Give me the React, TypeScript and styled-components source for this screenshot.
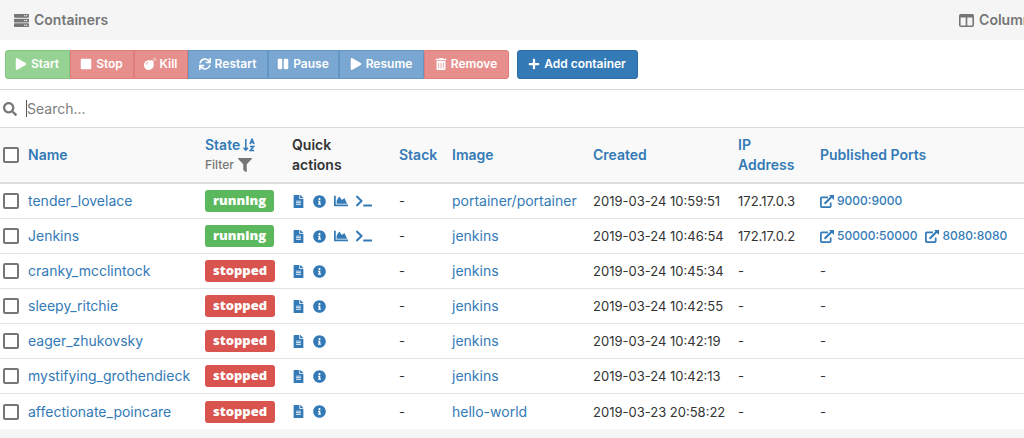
import React from 'react';
import styled, { createGlobalStyle } from 'styled-components';
import {
  FaServer, FaPlay, FaStop, FaBomb, FaSync, FaPause, FaTrashAlt, FaPlus, FaSearch,
  FaFileAlt, FaInfoCircle, FaChartArea, FaTerminal, FaFilter,
} from 'react-icons/fa';

const GlobalStyle = createGlobalStyle`
  * { box-sizing: border-box; }
  body {
    margin: 0;
    background: #f5f5f5;
    color: #333;
    font-family: Inter, "Open Sans", sans-serif;
    font-size: 13px;
    line-height: 20px;
  }
  svg { display: block; flex: none; }
`;

const Page = styled.main`
  overflow: hidden;
`;

const Widget = styled.section`
  min-width: 1053px;
  background: #fff;
`;

const TitleBar = styled.header`
  display: flex;
  align-items: center;
  justify-content: space-between;
  height: 40px;
  padding: 0 14px;
  background: #f5f5f5;
  color: #767676;
`;

const Title = styled.h1`
  display: flex;
  align-items: center;
  gap: 5px;
  margin: 0;
  font-size: 14px;
  font-weight: 600;
`;

const ColumnsButton = styled.button`
  display: flex;
  align-items: center;
  gap: 5px;
  padding: 0;
  border: 0;
  background: none;
  color: inherit;
  font: 600 14px/20px Inter, sans-serif;
  cursor: pointer;
`;

const ActionBar = styled.div`
  display: flex;
  gap: 8px;
  padding: 10px 5px;
`;

const ButtonGroup = styled.div`
  display: flex;
  & > button { border-radius: 0; }
  & > button:first-child { border-radius: 3px 0 0 3px; }
  & > button:last-child { border-radius: 0 3px 3px 0; }
`;

const tones = {
  success: ['#96d294', '#82c57f'],
  danger: ['#e78f8d', '#e07c79'],
  primary: ['#7aa7d1', '#6496c5'],
  solid: ['#337ab7', '#2e6da4'],
};

const ActionButton = styled.button<{ $tone: keyof typeof tones; $width: number }>`
  display: flex;
  align-items: center;
  justify-content: center;
  gap: 4px;
  width: ${(p) => p.$width}px;
  height: 29px;
  padding: 0 1px 1px 0;
  border: 1px solid ${(p) => tones[p.$tone][1]};
  border-radius: 3px;
  background: ${(p) => tones[p.$tone][0]};
  color: #fff;
  font: 600 12px/18px Inter, sans-serif;
  white-space: nowrap;
`;

const SearchBar = styled.label`
  display: flex;
  align-items: center;
  gap: 9px;
  height: 38px;
  padding: 0 3px;
  border-top: 1px solid #d9d9d9;
  color: #767676;
`;

const SearchInput = styled.input`
  flex: 1;
  height: 17px;
  padding: 0;
  border: 0;
  border-left: 1px solid #555;
  outline: 0;
  background: none;
  font: 14px/17px Inter, sans-serif;
  &::placeholder { color: #7d7d7d; opacity: 1; }
`;

const Table = styled.table`
  width: 100%;
  table-layout: fixed;
  border-collapse: separate;
  border-spacing: 0;
`;

const HeadCell = styled.th`
  height: 57px;
  padding: 0;
  border-top: 1px solid #d9d9d9;
  border-bottom: 2px solid #ddd;
  background: #f9f9f9;
  font-size: 14px;
  font-weight: 600;
  text-align: left;
`;

const Cell = styled.td`
  height: 35px;
  padding: 0;
  border-bottom: 1px solid #e2e2e2;
  white-space: nowrap;
  tr:last-child > & { border-bottom: 0; }
`;

const Link = styled.a`
  color: #337ab7;
  text-decoration: none;
`;

const CellLink = styled(Link)`
  font-size: 14px;
`;

const Inline = styled.span<{ $gap: number }>`
  display: flex;
  align-items: center;
  gap: ${(p) => p.$gap}px;
`;

const IconLink = styled(Link)`
  display: inline-flex;
  align-items: center;
  gap: 3px;
`;

const PortLink = styled(IconLink)`
  font-size: 12px;
  font-weight: 500;
`;

const FilterButton = styled.button`
  display: flex;
  align-items: center;
  gap: 4px;
  padding: 0;
  border: 0;
  background: none;
  color: #767676;
  font: 500 12px/20px Inter, sans-serif;
`;

const Check = styled.input`
  display: block;
  appearance: none;
  width: 16px;
  height: 16px;
  margin: 0 0 0 3px;
  border: 2px solid #767676;
  border-radius: 2px;
  background: #fff;
`;

const Badge = styled.span<{ $running: boolean }>`
  display: inline-block;
  height: 22px;
  padding: 0 8px;
  border-radius: 3px;
  background: ${(p) => (p.$running ? '#5cb85c' : '#d9534f')};
  color: #fff;
  font: 800 13px/20px "Open Sans", sans-serif;
  vertical-align: middle;
`;

const ColumnsIcon = () => (
  <svg width="15" height="13" viewBox="0 0 15 13" fill="none" stroke="currentColor" aria-hidden="true">
    <rect x=".8" y=".8" width="13.4" height="11.4" rx="1" strokeWidth="1.6" />
    <path d="M1 2h13" strokeWidth="3" />
    <path d="M7.5 3v9" strokeWidth="1.6" />
  </svg>
);

const SortAlphaIcon = () => (
  <svg width="12" height="14" viewBox="0 0 12 14" fill="none" stroke="currentColor" strokeWidth="1.5" aria-hidden="true">
    <path d="M2.8 1v11M.6 9.8 2.8 12.2 5 9.8" />
    <path d="M6.9 6 9 1.2 11.1 6M7.8 4.6h2.4M7 8.6h3.5L7.3 12.5h3.9" strokeWidth="1.5" />
  </svg>
);

const ExternalLinkIcon = () => (
  <svg width="14" height="13" viewBox="0 0 14 13" fill="none" stroke="currentColor" aria-hidden="true">
    <path d="M8 2.3H1.6Q.9 2.3.9 3v8.3q0 .8.8.8h8.2q.8 0 .8-.8V7.6" strokeWidth="1.7" />
    <path d="M4.6 8.8 11.6 1.8" strokeWidth="2.1" />
    <path d="M9 0h5v5Z" fill="currentColor" stroke="none" />
  </svg>
);

const actions = [
  { label: 'Start', icon: FaPlay, tone: 'success', width: 65 },
  { label: 'Stop', icon: FaStop, tone: 'danger', width: 64 },
  { label: 'Kill', icon: FaBomb, tone: 'danger', width: 54 },
  { label: 'Restart', icon: FaSync, tone: 'primary', width: 80 },
  { label: 'Pause', icon: FaPause, tone: 'primary', width: 71 },
  { label: 'Resume', icon: FaPlay, tone: 'primary', width: 85 },
  { label: 'Remove', icon: FaTrashAlt, tone: 'danger', width: 85 },
] as const;

const columnWidths = [28, 177, 87, 107, 53, 141, 145, 82];

type Container = { name: string; running?: boolean; image: string; created: string; ip?: string; ports?: string[] };

const containers: Container[] = [
  { name: 'tender_lovelace', running: true, image: 'portainer/portainer', created: '2019-03-24 10:59:51', ip: '172.17.0.3', ports: ['9000:9000'] },
  { name: 'Jenkins', running: true, image: 'jenkins', created: '2019-03-24 10:46:54', ip: '172.17.0.2', ports: ['50000:50000', '8080:8080'] },
  { name: 'cranky_mcclintock', image: 'jenkins', created: '2019-03-24 10:45:34' },
  { name: 'sleepy_ritchie', image: 'jenkins', created: '2019-03-24 10:42:55' },
  { name: 'eager_zhukovsky', image: 'jenkins', created: '2019-03-24 10:42:19' },
  { name: 'mystifying_grothendieck', image: 'jenkins', created: '2019-03-24 10:42:13' },
  { name: 'affectionate_poincare', image: 'hello-world', created: '2019-03-23 20:58:22' },
];

const ContainerRow = ({ item }: { item: Container }) => (
  <tr>
    <Cell><Check type="checkbox" aria-label={`Select ${item.name}`} /></Cell>
    <Cell><CellLink href="#">{item.name}</CellLink></Cell>
    <Cell><Badge $running={!!item.running}>{item.running ? 'running' : 'stopped'}</Badge></Cell>
    <Cell>
      <Inline $gap={8}>
        <IconLink href="#" aria-label="Logs"><FaFileAlt size={13} /></IconLink>
        <IconLink href="#" aria-label="Inspect"><FaInfoCircle size={13} /></IconLink>
        {item.running && <IconLink href="#" aria-label="Stats"><FaChartArea size={14} /></IconLink>}
        {item.running && <IconLink href="#" aria-label="Console"><FaTerminal size={16} /></IconLink>}
      </Inline>
    </Cell>
    <Cell>-</Cell>
    <Cell><CellLink href="#">{item.image}</CellLink></Cell>
    <Cell>{item.created}</Cell>
    <Cell>{item.ip ?? '-'}</Cell>
    <Cell>
      {item.ports ? (
        <Inline $gap={8}>
          {item.ports.map((port) => (
            <PortLink href="#" key={port}><ExternalLinkIcon />{port}</PortLink>
          ))}
        </Inline>
      ) : '-'}
    </Cell>
  </tr>
);

export default function App() {
  return (
    <Page>
      <GlobalStyle />
      <Widget>
        <TitleBar>
          <Title><FaServer size={15} />Containers</Title>
          <ColumnsButton><ColumnsIcon />Columns</ColumnsButton>
        </TitleBar>
        <ActionBar>
          <ButtonGroup>
            {actions.map(({ label, icon: Icon, tone, width }) => (
              <ActionButton key={label} $tone={tone} $width={width} disabled>
                <Icon size={12} />{label}
              </ActionButton>
            ))}
          </ButtonGroup>
          <ActionButton $tone="solid" $width={121}><FaPlus size={12} />Add container</ActionButton>
        </ActionBar>
        <SearchBar>
          <FaSearch size={14} />
          <SearchInput type="text" placeholder="Search..." aria-label="Search" />
        </SearchBar>
        <Table>
          <colgroup>
            {columnWidths.map((width, i) => <col key={i} width={width} />)}
            <col />
          </colgroup>
          <thead>
            <tr>
              <HeadCell><Check type="checkbox" aria-label="Select all" /></HeadCell>
              <HeadCell><Link href="#">Name</Link></HeadCell>
              <HeadCell>
                <IconLink href="#">State<SortAlphaIcon /></IconLink>
                <FilterButton>Filter<FaFilter size={14} /></FilterButton>
              </HeadCell>
              <HeadCell>Quick<br />actions</HeadCell>
              <HeadCell><Link href="#">Stack</Link></HeadCell>
              <HeadCell><Link href="#">Image</Link></HeadCell>
              <HeadCell><Link href="#">Created</Link></HeadCell>
              <HeadCell><Link href="#">IP<br />Address</Link></HeadCell>
              <HeadCell><Link href="#">Published Ports</Link></HeadCell>
            </tr>
          </thead>
          <tbody>
            {containers.map((item) => <ContainerRow key={item.name} item={item} />)}
          </tbody>
        </Table>
      </Widget>
    </Page>
  );
}
